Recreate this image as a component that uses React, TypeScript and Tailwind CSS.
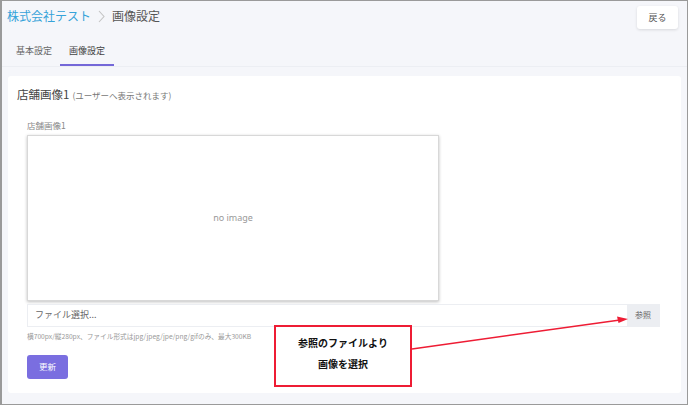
const font = { fontFamily: '"Noto Sans CJK JP", "Noto Sans", sans-serif' };

const App = () => {
  return (
    <div
      className="relative w-[688px] h-[405px] overflow-hidden border border-l-2 border-[#9a9a9a] bg-[#f5f6fa] text-[#555]"
      style={font}
    >
      {/* Header */}
      <div className="flex items-start justify-between pl-[5px] pr-[9px] pt-[4px]">
        <div className="mt-[1px] flex items-center gap-[5px] text-[12px] leading-[20px]">
          <span className="text-[#36a3d9]">株式会社テスト</span>
          <svg width="7" height="13" viewBox="0 0 7 13" className="mx-[2px]">
            <path d="M1 1 L6 6.5 L1 12" fill="none" stroke="#c4c4c4" strokeWidth="1.1" />
          </svg>
          <span className="text-[#555]">画像設定</span>
        </div>
        <button className="mt-[1px] h-[23px] w-[41px] rounded-[3px] bg-white text-[9px] text-[#555] shadow-[0_1px_3px_rgba(0,0,0,0.12)]">
          戻る
        </button>
      </div>

      {/* Tabs */}
      <div className="mt-[15px] flex border-b border-[#eceef3] px-[6px] text-[9px] text-[#666]">
        <div className="px-[8px] pb-[8px]">基本設定</div>
        <div className="border-b-2 border-[#7468d8] px-[9px] pb-[6px] text-[#444]">画像設定</div>
      </div>

      {/* Card */}
      <div className="mx-[6px] mt-[9px] h-[317px] rounded-[3px] bg-white pl-[9px] pr-[19px] pt-[10px]">
        <div className="flex items-baseline">
          <span className="text-[11.5px] text-[#444]">店舗画像1</span>
          <span className="ml-[3px] text-[8.5px] text-[#777]">(ユーザーへ表示されます)</span>
        </div>

        <div className="mt-[16px] pl-[10px]">
          <div className="text-[8.5px] text-[#888]">店舗画像1</div>
          <div className="mt-[3px] flex h-[166px] w-[412px] items-center justify-center border border-[#d8d8d8] shadow-[0_1px_3px_rgba(0,0,0,0.25)]">
            <span className="text-[9px] text-[#999]" style={{ fontFamily: '"Noto Sans", sans-serif' }}>
              no image
            </span>
          </div>

          <div className="mt-[3px] flex h-[23px] w-[633px] border border-[#eceef2]">
            <div className="flex flex-1 items-center pl-[7px] text-[9px] text-[#666]">ファイル選択...</div>
            <div className="flex w-[32px] items-center justify-center bg-[#eceef2] text-[8px] text-[#666]">参照</div>
          </div>

          <div className="mt-[4px] text-[6.7px] text-[#999]">
            横700px/縦280px、ファイル形式はjpg/jpeg/jpe/png/gifのみ、最大300KB
          </div>

          <button className="mt-[14px] h-[24px] w-[41px] rounded-[3px] bg-[#7a6ee0] text-[8.5px] text-white">
            更新
          </button>
        </div>
      </div>

      {/* Annotation */}
      <div className="absolute left-[272px] top-[324px] flex h-[62px] w-[138px] flex-col items-center justify-center gap-[6px] border-2 border-[#ee1c34] bg-white pb-[6px] text-[10px] font-bold text-[#111]">
        <div>参照のファイルより</div>
        <div>画像を選択</div>
      </div>
      <svg className="absolute left-0 top-0" width="688" height="405">
        <line x1="410" y1="348" x2="618" y2="319" stroke="#ee1c34" strokeWidth="1.5" />
        <polygon points="626,318 615,315.5 616.5,322" fill="#ee1c34" />
      </svg>
    </div>
  );
};

export default App;
